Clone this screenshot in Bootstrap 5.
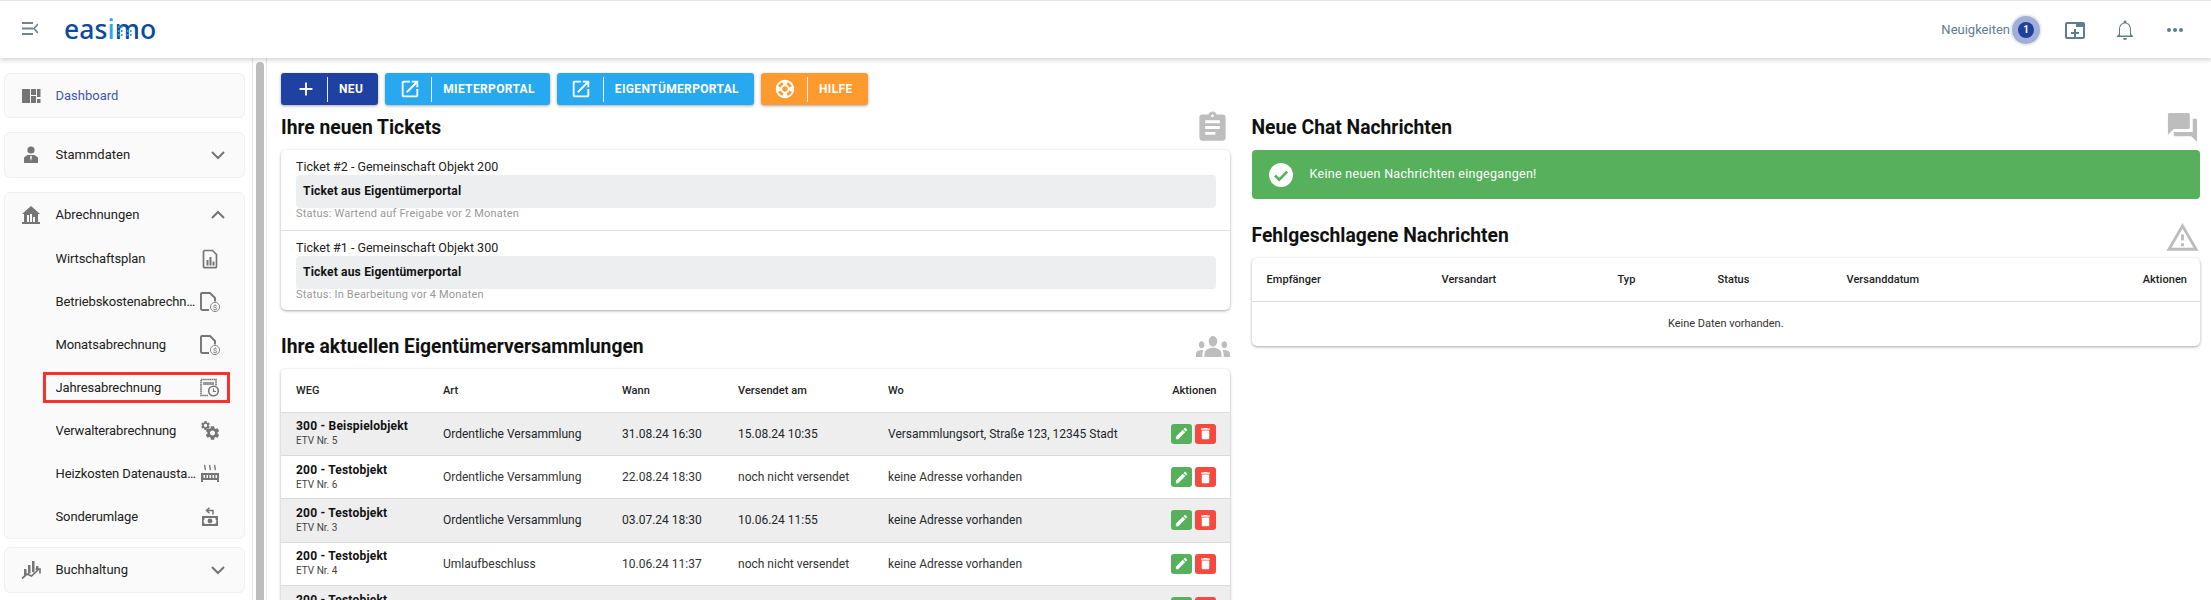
<!DOCTYPE html>
<html lang="de">
<head>
<meta charset="utf-8">
<title>easimo</title>
<link href="https://cdn.jsdelivr.net/npm/bootstrap@5.3.0/dist/css/bootstrap.min.css" rel="stylesheet">
<style>
html,body{height:600px;overflow:hidden}
body{font-family:Roboto,"Liberation Sans",sans-serif;font-size:13px;color:#212121;background:#fff}
.top-bar{height:58px;border-top:1px solid #e3e3e3;background:#fff;box-shadow:0 2px 5px rgba(0,0,0,.18);position:relative;z-index:3;padding:0 24px 0 22px}
.menu-ico{width:16px;height:13px;margin-top:-3px}
.brand{font-family:"Noto Sans",sans-serif;font-size:26.5px;font-weight:500;color:#0b4a9e;letter-spacing:.1px;line-height:30px;margin-left:26px;position:relative;margin-top:-1px}
.brand b{font-weight:500;color:#29a8f0}
.brand svg{position:absolute;left:53px;top:10px;width:16px;height:14px}
.news{color:#607d8b;font-size:13px;margin-right:8px}
.news-count{width:16px;height:16px;border-radius:50%;background:#1e40a0;color:#fff;font-size:10px;font-weight:700;line-height:16px;text-align:center;box-shadow:0 0 0 6px rgba(30,64,160,.35),0 0 0 8px rgba(30,64,160,.1);margin-right:29px}
.top-ico{width:24px;height:24px;margin-right:26px;fill:#607d8b}
.top-ico:last-child{margin-right:0}
.shell{height:542px}
.side{width:253px;flex:none;padding:15px 7px 0 4px;overflow:hidden;border-right:1px solid #e6e6e6}
.scroll-rail{width:14px;flex:none;border-right:1px solid #e6e6e6;padding:4px 2px 0 3px;overflow:hidden}
.scroll-thumb{height:600px;width:8px;background:#bdbdbd;border-radius:4px 4px 0 0}
.panel{background:#fafafa;border:1px solid #f0f0f0;border-radius:6px;flex:none}
.rule{height:1px;background:#e2e2e2;margin:7px 7px}
.top-row{height:43px;padding:0 14px 0 16px}
.top-row.tall{height:44px}
.top-row .glyph{width:20px;height:20px;margin-right:14.5px;flex:none;fill:#757575}
.top-row .chev{width:24px;height:24px;fill:none;stroke:#757575;stroke-width:2;flex:none}
.active-link{color:#3f57b0}
.sub-row{height:43px;padding:0 24px 0 50.5px;position:relative;letter-spacing:-.12px}
.sub-row .glyph{width:20px;height:20px;margin-left:2px;flex:none;fill:#757575}
.marked::after{content:"";position:absolute;left:38px;right:14px;top:6px;height:31px;border:3px solid #f8312a}
.page{flex:1;min-width:0;padding:15px 0 0 3px;overflow:hidden}
.act-btn{height:32px;border:0;border-radius:3px;color:#fff;font-size:12px;font-weight:700;letter-spacing:.35px;padding:0 15px 0 0;box-shadow:0 1px 3px rgba(0,0,0,.35);margin-right:7px}
.act-btn:last-child{margin-right:0}
.act-ico{width:47px;height:25px;border-right:1px solid rgba(255,255,255,.9);margin-right:11px;flex:none;padding-left:3px}
.act-ico svg{width:22px;height:22px;fill:#fff}
.tone-navy,.tone-navy:hover{background:#1f41a1;color:#fff}
.tone-sky,.tone-sky:hover{background:#27a9f2;color:#fff}
.tone-amber,.tone-amber:hover{background:#ff9a2e;color:#fff}
.pane{padding:0 11px}
.sec-head{height:35px;margin-top:5px;margin-bottom:5px}
.sec-head h2{font-size:19.3px;font-weight:700;margin:0;color:#111}
.sec-head svg{width:35px;height:35px;fill:#bdbdbd;flex:none}
.sec-head svg.wide-ico{width:34px;height:21px}
.sec-head.second{margin-top:19px;margin-bottom:5px}
.sec-head.third{margin-top:21px;margin-bottom:3px}
.sec-head.third h2{padding-bottom:3px}
.box{background:#fff;border-radius:5px;box-shadow:0 1px 3px rgba(0,0,0,.35);overflow:hidden}
.tick{height:80px;padding:9px 14px 0 15px}
.tick+.tick{border-top:1px solid #e0e0e0}
.tick-title{line-height:16px;height:16px;color:#222;font-size:12.5px}
.tick-body{height:33px;background:#eceef0;border-radius:4px;font-size:12px;font-weight:700;color:#111;padding-left:7px;line-height:33px;letter-spacing:.2px}
.tick-status{font-size:11px;color:#999;line-height:12px;letter-spacing:.2px}
.data-table{table-layout:fixed;margin:0;font-size:12px;--bs-table-striped-bg:#eee;--bs-table-bg:transparent}
.data-table th{font-size:11px;font-weight:500;color:#222;height:43px;vertical-align:top;padding:14px 0 0 15px;border-bottom:1px solid #ddd;letter-spacing:.05px}
.data-table td{height:43.4px;padding:0 0 0 15px;vertical-align:middle;border-bottom:1px solid #d9d9d9;color:#333;white-space:nowrap}
.data-table th.end{text-align:right;padding-right:13px;padding-left:0}
.data-table td.end{text-align:right;padding-right:14px;padding-left:0}
.weg-name{font-weight:700;color:#111;line-height:15px;letter-spacing:.2px}
.weg-sub{font-size:10px;line-height:14px;color:#444}
.mini-btn{width:21px;height:20px;padding:0;border:0;border-radius:3px;margin-left:3px;vertical-align:middle}
.mini-btn svg{width:15px;height:15px;fill:#fff;display:block;margin:auto}
.mini-ok,.mini-ok:hover{background:#57b05b}
.mini-del,.mini-del:hover{background:#f44a3f}
.note-ok{height:49px;background:#57b05b;border-radius:4px;color:#fff;padding-left:17px;letter-spacing:.3px;font-size:12.5px}
.note-ok svg{width:24px;height:24px;margin-right:17px}
.data-table td.empty-cell{text-align:center;height:45px;border-bottom:0;padding:0;font-size:11px}
</style>
</head>
<body>
<header class="top-bar d-flex align-items-center">
  <svg class="menu-ico" viewBox="0 0 16 13" fill="none" stroke="#6f8591" stroke-width="1.8"><path d="M0 1h11M0 6.500h11M0 12h11M16 2l-4 4.500 4 4.500"/></svg>
  <div class="brand">eas<b>i</b>mo<svg viewBox="0 0 16 14" fill="#29a8f0"><rect x="1" y="2" width="1.600" height="2"/><rect x="4" y="2" width="1.600" height="2"/><rect x="1" y="6" width="1.600" height="2"/><rect x="4" y="6" width="1.600" height="2"/><rect x="1" y="10" width="1.600" height="2"/><rect x="4" y="10" width="1.600" height="2"/><rect x="10" y="6" width="1.600" height="2"/><rect x="13" y="6" width="1.600" height="2"/><rect x="10" y="10" width="1.600" height="2"/><rect x="13" y="10" width="1.600" height="2"/></svg></div>
  <div class="ms-auto d-flex align-items-center">
    <span class="news">Neuigkeiten</span>
    <span class="news-count">1</span>
    <svg class="top-ico" viewBox="0 0 24 24"><path d="M4 4h16a2 2 0 0 1 2 2v13a2 2 0 0 1-2 2H4a2 2 0 0 1-2-2V6a2 2 0 0 1 2-2zm0 2v13h16V9h-7V6H4zm7 5h2v3h3v2h-3v3h-2v-3H8v-2h3v-3z"/></svg>
    <svg class="top-ico" viewBox="0 0 24 24"><path d="M12 22c1.100 0 2-.9 2-2h-4c0 1.100.9 2 2 2zm6-6v-5c0-3.070-1.630-5.640-4.500-6.320V4c0-.83-.67-1.500-1.500-1.500s-1.500.67-1.500 1.500v.68C7.640 5.360 6 7.920 6 11v5l-2 2v1h16v-1l-2-2zm-1 1.500H7V11c0-2.900 1.900-5.500 5-5.500s5 2.600 5 5.500v6.500z"/></svg>
    <svg class="top-ico" viewBox="0 0 24 24"><circle cx="6" cy="12" r="2"/><circle cx="12" cy="12" r="2"/><circle cx="18" cy="12" r="2"/></svg>
  </div>
</header>
<div class="shell d-flex">
  <aside class="side d-flex flex-column">
    <div class="panel"><div class="top-row d-flex align-items-center">
      <svg class="glyph" viewBox="0 0 20 20"><rect x="1" y="3" width="8" height="14"/><rect x="10" y="3" width="5" height="6"/><rect x="16" y="3" width="3.500" height="8"/><rect x="10" y="10" width="5" height="7"/><rect x="16" y="13" width="3.500" height="4"/></svg>
      <span class="active-link">Dashboard</span></div></div>
    <div class="rule"></div>
    <div class="panel"><div class="top-row tall d-flex align-items-center">
      <svg class="glyph" viewBox="0 0 20 20"><circle cx="10" cy="5" r="3.600"/><path d="M6.500 10h7l3.500 2.500V18H3v-5.500zM10 10.500l-1 1.500 1 4 1-4z" fill-rule="evenodd"/></svg>
      <span class="flex-grow-1">Stammdaten</span>
      <svg class="chev" viewBox="0 0 24 24"><path d="M6 9l6 6 6-6"/></svg></div></div>
    <div class="rule"></div>
    <div class="panel">
      <div class="top-row tall d-flex align-items-center">
        <svg class="glyph" viewBox="0 0 20 20"><path d="M10 1l9 8h-2v8h2v2H1v-2h2V9H1zM6 10v7h2v-7zm3-1v8h2V9zm3 3v5h2v-5z" fill-rule="evenodd"/></svg>
        <span class="flex-grow-1">Abrechnungen</span>
        <svg class="chev" viewBox="0 0 24 24"><path d="M6 15l6-6 6 6"/></svg></div>
      <div class="sub-row d-flex align-items-center"><span class="flex-grow-1 text-truncate">Wirtschaftsplan</span>
        <svg class="glyph" viewBox="0 0 20 20"><path d="M4.500 1.500h8l4 4v12a1.200 1.200 0 0 1-1.200 1.200H4.700A1.200 1.200 0 0 1 3.500 17.500V2.500z" fill="none" stroke="#757575" stroke-width="1.700"/><rect x="6.500" y="11" width="2" height="5.500"/><rect x="9.500" y="8" width="2" height="8.500"/><rect x="12.500" y="12.500" width="2" height="4"/></svg></div>
      <div class="sub-row d-flex align-items-center"><span class="flex-grow-1 text-truncate">Betriebskostenabrechnung</span>
        <svg class="glyph" viewBox="0 0 20 20"><path d="M9 18H2.200A1.200 1.200 0 0 1 1 16.800V2A1 1 0 0 1 2 1h8l5 5v3.500" fill="none" stroke="#757575" stroke-width="1.900"/><circle cx="15" cy="15" r="4.600" fill="#fafafa" stroke="#8a8a8a"/><text x="15" y="18" font-size="8" text-anchor="middle" fill="#757575" font-family="Roboto">$</text></svg></div>
      <div class="sub-row d-flex align-items-center"><span class="flex-grow-1 text-truncate">Monatsabrechnung</span>
        <svg class="glyph" viewBox="0 0 20 20"><path d="M9 18H2.200A1.200 1.200 0 0 1 1 16.800V2A1 1 0 0 1 2 1h8l5 5v3.500" fill="none" stroke="#757575" stroke-width="1.900"/><circle cx="15" cy="15" r="4.600" fill="#fafafa" stroke="#8a8a8a"/><text x="15" y="18" font-size="8" text-anchor="middle" fill="#757575" font-family="Roboto">$</text></svg></div>
      <div class="sub-row marked d-flex align-items-center"><span class="flex-grow-1 text-truncate">Jahresabrechnung</span>
        <svg class="glyph" viewBox="0 0 20 20"><path d="M1 1.500h15V8M8 17.500H1v-16" fill="none" stroke="#757575" stroke-width="1.600" stroke-dasharray="1.600 .5"/><path d="M3 4h11v3H3z" fill="#9a9a9a"/><circle cx="13.500" cy="13" r="5.600" fill="#757575"/><circle cx="13.500" cy="13" r="4" fill="#fafafa"/><path d="M13.500 10.500V13.500h2.500" fill="none" stroke="#757575" stroke-width="1.200"/></svg></div>
      <div class="sub-row d-flex align-items-center"><span class="flex-grow-1 text-truncate">Verwalterabrechnung</span>
        <svg class="glyph" viewBox="0 0 20 20"><svg x="0" y="-1" width="11" height="11" viewBox="0 0 24 24"><use href="#gear"/></svg><svg x="4" y="3.500" width="17" height="17" viewBox="0 0 24 24"><use href="#gear"/></svg></svg></div>
      <div class="sub-row d-flex align-items-center"><span class="flex-grow-1 text-truncate">Heizkosten Datenaustausch</span>
        <svg class="glyph" viewBox="0 0 20 20"><path d="M5 1c-1.300 2 1.300 3 0 5M10 1c-1.300 2 1.300 3 0 5M15 1c-1.300 2 1.300 3 0 5" fill="none" stroke="#757575" stroke-width="1.400"/><path d="M1 9h18v9h-2v-2H3v2H1zM3.500 11v3h1.500v-3zm3 0v3H8v-3zm3 0v3H11v-3zm3 0v3H14v-3zm3 0v3H17v-3z" fill-rule="evenodd"/></svg></div>
      <div class="sub-row d-flex align-items-center"><span class="flex-grow-1 text-truncate">Sonderumlage</span>
        <svg class="glyph" viewBox="0 0 20 20"><path d="M9.500 .8L6.500 3.500l3 2.700M7 3.500H13V7.500" fill="none" stroke="#757575" stroke-width="1.500"/><path d="M2 9h16v10H2zm2.500 2v1.200a1 1 0 0 1-.8.8v2.500a1 1 0 0 1 .8.8v.7h11v-.7a1 1 0 0 1 .8-.8V13a1 1 0 0 1-.8-.8V11z" fill-rule="evenodd"/><circle cx="10" cy="14" r="2.400"/></svg></div>
    </div>
    <div class="panel mt-2"><div class="top-row tall d-flex align-items-center">
      <svg class="glyph" viewBox="0 0 20 20"><path d="M3 9h2.500v5L3 16zM7 5h2.500v8L7 14.500zM11 1h2.500v11l-1 .6-1.500-.8zM15 6h2.500v2.800L15 10.600z"/><path d="M1 18.500l5-4.500 4.500 2 7-6.500M14.500 9H19v4.500" fill="none" stroke="#757575" stroke-width="1.700"/></svg>
      <span class="flex-grow-1">Buchhaltung</span>
      <svg class="chev" viewBox="0 0 24 24"><path d="M6 9l6 6 6-6"/></svg></div></div>
    <div class="panel mt-2 flex-grow-1"></div>
  </aside>
  <div class="scroll-rail"><div class="scroll-thumb"></div></div>
  <main class="page">
    <div class="d-flex pane">
      <a class="btn act-btn tone-navy d-inline-flex align-items-center"><span class="act-ico d-flex align-items-center justify-content-center"><svg viewBox="0 0 24 24"><path d="M11 5h2v6h6v2h-6v6h-2v-6H5v-2h6z"/></svg></span>NEU</a>
      <a class="btn act-btn tone-sky d-inline-flex align-items-center"><span class="act-ico d-flex align-items-center justify-content-center"><svg viewBox="0 0 24 24"><path d="M19 19H5V5h7V3H5c-1.110 0-2 .9-2 2v14c0 1.100.89 2 2 2h14c1.100 0 2-.9 2-2v-7h-2v7zM14 3v2h3.590l-9.830 9.830 1.410 1.410L19 6.410V10h2V3h-7z"/></svg></span>MIETERPORTAL</a>
      <a class="btn act-btn tone-sky d-inline-flex align-items-center"><span class="act-ico d-flex align-items-center justify-content-center"><svg viewBox="0 0 24 24"><path d="M19 19H5V5h7V3H5c-1.110 0-2 .9-2 2v14c0 1.100.89 2 2 2h14c1.100 0 2-.9 2-2v-7h-2v7zM14 3v2h3.590l-9.830 9.830 1.410 1.410L19 6.410V10h2V3h-7z"/></svg></span>EIGENTÜMERPORTAL</a>
      <a class="btn act-btn tone-amber d-inline-flex align-items-center"><span class="act-ico d-flex align-items-center justify-content-center"><svg viewBox="0 0 24 24"><path d="M12 2C6.480 2 2 6.480 2 12s4.480 10 10 10 10-4.480 10-10S17.520 2 12 2zm7.460 7.120l-2.780 1.150c-.51-1.360-1.580-2.440-2.950-2.940l1.150-2.780c2.100.8 3.770 2.470 4.580 4.570zM12 15c-1.660 0-3-1.340-3-3s1.340-3 3-3 3 1.340 3 3-1.340 3-3 3zM9.130 4.540l1.170 2.780c-1.380.5-2.470 1.590-2.980 2.970L4.540 9.130c.81-2.110 2.480-3.780 4.590-4.590zM4.540 14.870l2.780-1.150c.51 1.380 1.590 2.460 2.970 2.960l-1.170 2.780c-2.100-.81-3.770-2.480-4.580-4.590zm10.340 4.590l-1.150-2.780c1.370-.51 2.450-1.590 2.950-2.970l2.780 1.170c-.81 2.100-2.480 3.770-4.580 4.580z"/></svg></span>HILFE</a>
    </div>
    <div class="row g-0">
      <div class="col-6 pane">
        <div class="sec-head d-flex justify-content-between align-items-center"><h2>Ihre neuen Tickets</h2>
          <svg viewBox="0 0 24 24"><path d="M19 3h-4.180C14.400 1.840 13.300 1 12 1c-1.300 0-2.400.84-2.820 2H5c-1.100 0-2 .9-2 2v14c0 1.100.9 2 2 2h14c1.100 0 2-.9 2-2V5c0-1.100-.9-2-2-2zm-7 0c.55 0 1 .45 1 1s-.45 1-1 1-1-.45-1-1 .45-1 1-1zm2 14H7v-2h7v2zm3-4H7v-2h10v2zm0-4H7V7h10v2z"/></svg></div>
        <div class="box">
          <div class="tick"><div class="tick-title">Ticket #2 - Gemeinschaft Objekt 200</div><div class="tick-body">Ticket aus Eigentümerportal</div><div class="tick-status">Status: Wartend auf Freigabe vor 2 Monaten</div></div>
          <div class="tick"><div class="tick-title">Ticket #1 - Gemeinschaft Objekt 300</div><div class="tick-body">Ticket aus Eigentümerportal</div><div class="tick-status">Status: In Bearbeitung vor 4 Monaten</div></div>
        </div>
        <div class="sec-head second d-flex justify-content-between align-items-center"><h2>Ihre aktuellen Eigentümerversammlungen</h2>
          <svg class="wide-ico" viewBox="0 6 24 12" preserveAspectRatio="none"><path d="M12 12.750c1.630 0 3.070.39 4.240.9 1.080.48 1.760 1.560 1.760 2.730V18H6v-1.610c0-1.180.68-2.260 1.760-2.730 1.170-.52 2.610-.91 4.240-.91zM4 13c1.100 0 2-.9 2-2s-.9-2-2-2-2 .9-2 2 .9 2 2 2zm1.130 1.100c-.37-.06-.74-.1-1.130-.1-.99 0-1.930.21-2.780.58C.48 14.900 0 15.620 0 16.430V18h4.500v-1.610c0-.83.23-1.610.63-2.290zM20 13c1.100 0 2-.9 2-2s-.9-2-2-2-2 .9-2 2 .9 2 2 2zm4 3.430c0-.81-.48-1.530-1.220-1.850-.85-.37-1.790-.58-2.780-.58-.39 0-.76.04-1.130.1.4.68.63 1.460.63 2.290V18H24v-1.570zM12 6c1.660 0 3 1.340 3 3s-1.340 3-3 3-3-1.340-3-3 1.340-3 3-3z"/></svg></div>
        <div class="box">
          <table class="table table-striped data-table">
            <colgroup><col style="width:147px"><col style="width:179px"><col style="width:116px"><col style="width:150px"><col><col style="width:100px"></colgroup>
            <thead><tr><th>WEG</th><th>Art</th><th>Wann</th><th>Versendet am</th><th>Wo</th><th class="end">Aktionen</th></tr></thead>
            <tbody>
              <tr><td><div class="weg-name">300 - Beispielobjekt</div><div class="weg-sub">ETV Nr. 5</div></td><td>Ordentliche Versammlung</td><td>31.08.24 16:30</td><td>15.08.24 10:35</td><td>Versammlungsort, Straße 123, 12345 Stadt</td><td class="end"><button class="btn mini-btn mini-ok"><svg viewBox="0 0 24 24"><use href="#pen"/></svg></button><button class="btn mini-btn mini-del"><svg viewBox="0 0 24 24"><use href="#bin"/></svg></button></td></tr>
              <tr><td><div class="weg-name">200 - Testobjekt</div><div class="weg-sub">ETV Nr. 6</div></td><td>Ordentliche Versammlung</td><td>22.08.24 18:30</td><td>noch nicht versendet</td><td>keine Adresse vorhanden</td><td class="end"><button class="btn mini-btn mini-ok"><svg viewBox="0 0 24 24"><use href="#pen"/></svg></button><button class="btn mini-btn mini-del"><svg viewBox="0 0 24 24"><use href="#bin"/></svg></button></td></tr>
              <tr><td><div class="weg-name">200 - Testobjekt</div><div class="weg-sub">ETV Nr. 3</div></td><td>Ordentliche Versammlung</td><td>03.07.24 18:30</td><td>10.06.24 11:55</td><td>keine Adresse vorhanden</td><td class="end"><button class="btn mini-btn mini-ok"><svg viewBox="0 0 24 24"><use href="#pen"/></svg></button><button class="btn mini-btn mini-del"><svg viewBox="0 0 24 24"><use href="#bin"/></svg></button></td></tr>
              <tr><td><div class="weg-name">200 - Testobjekt</div><div class="weg-sub">ETV Nr. 4</div></td><td>Umlaufbeschluss</td><td>10.06.24 11:37</td><td>noch nicht versendet</td><td>keine Adresse vorhanden</td><td class="end"><button class="btn mini-btn mini-ok"><svg viewBox="0 0 24 24"><use href="#pen"/></svg></button><button class="btn mini-btn mini-del"><svg viewBox="0 0 24 24"><use href="#bin"/></svg></button></td></tr>
              <tr><td><div class="weg-name">200 - Testobjekt</div><div class="weg-sub">&nbsp;</div></td><td></td><td></td><td></td><td></td><td class="end"><button class="btn mini-btn mini-ok"><svg viewBox="0 0 24 24"><use href="#pen"/></svg></button><button class="btn mini-btn mini-del"><svg viewBox="0 0 24 24"><use href="#bin"/></svg></button></td></tr>
            </tbody>
          </table>
        </div>
      </div>
      <div class="col-6 pane">
        <div class="sec-head d-flex justify-content-between align-items-center"><h2>Neue Chat Nachrichten</h2>
          <svg viewBox="0 0 24 24"><path d="M21 6h-2v9H6v2c0 .55.45 1 1 1h11l4 4V7c0-.55-.45-1-1-1zm-4 6V3c0-.55-.45-1-1-1H3c-.55 0-1 .45-1 1v14l4-4h10c.55 0 1-.45 1-1z"/></svg></div>
        <div class="note-ok d-flex align-items-center">
          <svg viewBox="0 0 24 24"><circle cx="12" cy="12" r="12" fill="#fff"/><path d="M6 12.500l4.200 4.200L18.200 8.600" fill="none" stroke="#57b05b" stroke-width="2.600"/></svg>
          Keine neuen Nachrichten eingegangen!</div>
        <div class="sec-head third d-flex justify-content-between align-items-center"><h2>Fehlgeschlagene Nachrichten</h2>
          <svg viewBox="0 0 24 24"><path d="M12 5.990L19.530 19H4.470L12 5.990M12 2L1 21h22L12 2zm1 14h-2v2h2v-2zm0-6h-2v4h2v-4z"/></svg></div>
        <div class="box">
          <table class="table data-table">
            <colgroup><col style="width:175px"><col style="width:176px"><col style="width:100px"><col style="width:129px"><col><col style="width:100px"></colgroup>
            <thead><tr><th>Empfänger</th><th>Versandart</th><th>Typ</th><th>Status</th><th>Versanddatum</th><th class="end">Aktionen</th></tr></thead>
            <tbody><tr><td colspan="6" class="empty-cell">Keine Daten vorhanden.</td></tr></tbody>
          </table>
        </div>
      </div>
    </div>
  </main>
</div>
<svg width="0" height="0" class="position-absolute"><defs>
  <path id="pen" d="M3 17.250V21h3.750L17.810 9.940l-3.750-3.750L3 17.250zM20.710 7.040c.39-.39.39-1.020 0-1.410l-2.340-2.340c-.39-.39-1.020-.39-1.410 0l-1.830 1.830 3.750 3.750 1.830-1.830z"/>
  <path id="bin" d="M6 19c0 1.100.9 2 2 2h8c1.100 0 2-.9 2-2V7H6v12zM19 4h-3.500l-1-1h-5l-1 1H5v2h14V4z"/>
  <path id="gear" d="M19.140 12.940c.04-.3.06-.61.06-.94 0-.32-.02-.64-.07-.94l2.030-1.580c.18-.14.23-.41.12-.61l-1.920-3.320c-.12-.22-.37-.29-.59-.22l-2.390.96c-.5-.38-1.030-.7-1.620-.94l-.36-2.540c-.04-.24-.24-.41-.48-.41h-3.840c-.24 0-.43.17-.47.41l-.36 2.540c-.59.24-1.130.57-1.620.94l-2.390-.96c-.22-.08-.47 0-.59.22L2.740 8.870c-.12.21-.08.47.12.61l2.030 1.580c-.05.3-.09.63-.09.94s.02.64.07.94l-2.030 1.580c-.18.14-.23.41-.12.61l1.920 3.320c.12.22.37.29.59.22l2.390-.96c.5.38 1.030.7 1.620.94l.36 2.540c.05.24.24.41.48.41h3.840c.24 0 .44-.17.47-.41l.36-2.540c.59-.24 1.130-.56 1.620-.94l2.390.96c.22.08.47 0 .59-.22l1.920-3.320c.12-.22.07-.47-.12-.61l-2.010-1.580zM12 15.600c-1.980 0-3.600-1.620-3.600-3.600s1.620-3.600 3.600-3.600 3.600 1.620 3.600 3.600-1.620 3.600-3.600 3.600z"/>
</defs></svg>
<script src="https://cdn.jsdelivr.net/npm/bootstrap@5.3.0/dist/js/bootstrap.bundle.min.js"></script>
</body>
</html>
